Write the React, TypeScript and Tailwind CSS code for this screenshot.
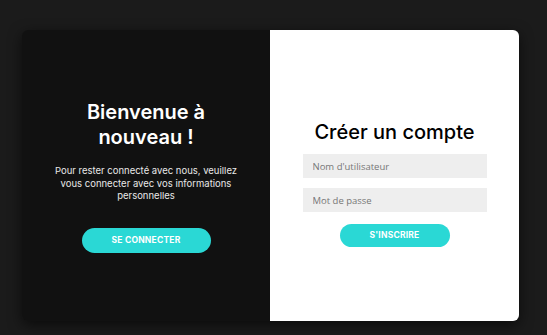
import React from "react";

const font = { fontFamily: "Inter, 'Noto Sans', sans-serif" };

export default function App() {
  return (
    <div
      className="w-[547px] h-[335px] bg-[#1b1b1b] pt-[30px] pl-[22px]"
      style={font}
    >
      <div className="w-[497px] h-[291px] flex rounded-md overflow-hidden shadow-[0_4px_14px_rgba(0,0,0,0.6)]">
        {/* left side */}
        <div className="w-[248px] h-full bg-[#111111] flex flex-col items-center pt-[70px]">
          <h1 className="text-white text-[20px] leading-[25px] font-semibold text-center">
            Bienvenue à
            <br />
            nouveau !
          </h1>
          <p className="mt-[15px] w-[200px] text-center text-[9.5px] leading-[12.5px] text-[#e8e8e8]">
            Pour rester connecté avec nous, veuillez vous connecter avec vos
            informations personnelles
          </p>
          <button className="mt-[25px] w-[129px] h-[25px] rounded-full bg-[#2ad8d5] text-white text-[8.5px] font-bold tracking-wide">
            SE CONNECTER
          </button>
        </div>
        {/* right side */}
        <div className="w-[249px] h-full bg-white flex flex-col items-center pt-[89px]">
          <h2 className="text-black text-[20px] leading-[26px] font-medium">
            Créer un compte
          </h2>
          <input
            placeholder="Nom d'utilisateur"
            className="mt-[9px] w-[184px] h-[24px] bg-[#eeeeee] px-[10px] text-[9.5px] placeholder:text-[#777] outline-none"
            style={{ fontFamily: "'Open Sans', sans-serif" }}
          />
          <input
            placeholder="Mot de passe"
            className="mt-[10px] w-[184px] h-[24px] bg-[#eeeeee] px-[10px] text-[9.5px] placeholder:text-[#777] outline-none"
            style={{ fontFamily: "'Open Sans', sans-serif" }}
          />
          <button className="mt-[12px] w-[110px] h-[23px] rounded-full bg-[#2ad8d5] text-white text-[8.5px] font-bold tracking-wide">
            S'INSCRIRE
          </button>
        </div>
      </div>
    </div>
  );
}
